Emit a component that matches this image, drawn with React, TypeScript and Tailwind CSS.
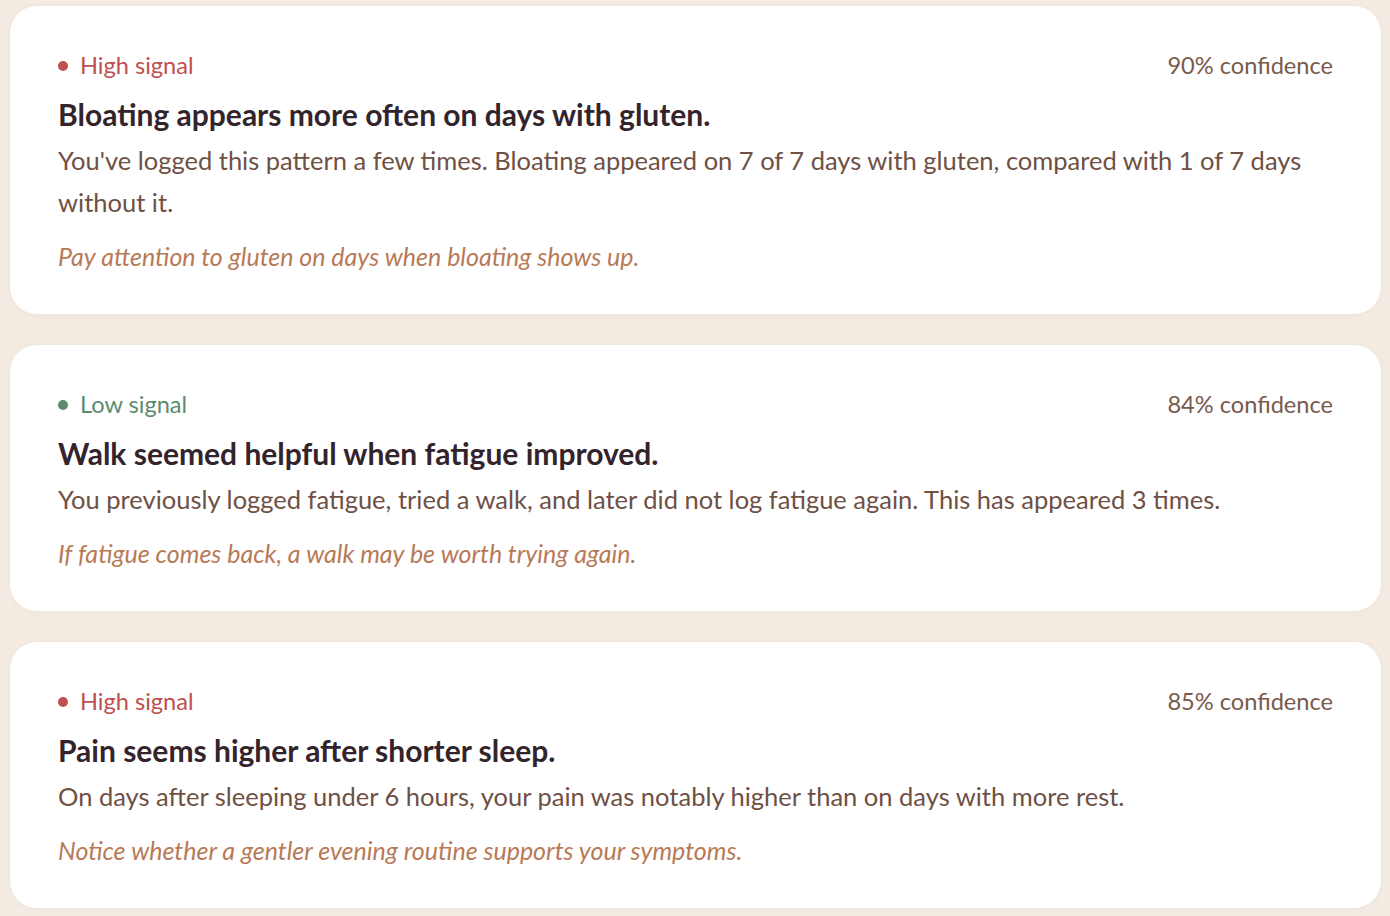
type Signal = "high" | "low";

type Insight = {
  signal: Signal;
  confidence: number;
  title: string;
  body: string;
  hint: string;
};

const insights: Insight[] = [
  {
    signal: "high",
    confidence: 90,
    title: "Bloating appears more often on days with gluten.",
    body: "You've logged this pattern a few times. Bloating appeared on 7 of 7 days with gluten, compared with 1 of 7 days without it.",
    hint: "Pay attention to gluten on days when bloating shows up.",
  },
  {
    signal: "low",
    confidence: 84,
    title: "Walk seemed helpful when fatigue improved.",
    body: "You previously logged fatigue, tried a walk, and later did not log fatigue again. This has appeared 3 times.",
    hint: "If fatigue comes back, a walk may be worth trying again.",
  },
  {
    signal: "high",
    confidence: 85,
    title: "Pain seems higher after shorter sleep.",
    body: "On days after sleeping under 6 hours, your pain was notably higher than on days with more rest.",
    hint: "Notice whether a gentler evening routine supports your symptoms.",
  },
];

function SignalLabel({ signal }: { signal: Signal }) {
  const high = signal === "high";
  return (
    <div className={high ? "flex items-center gap-[12px] text-[#c0504f]" : "flex items-center gap-[12px] text-[#5b8c70]"}>
      <span className={high ? "h-[10px] w-[10px] rounded-full bg-[#c0504f]" : "h-[10px] w-[10px] rounded-full bg-[#5b8c70]"} />
      <span>{high ? "High signal" : "Low signal"}</span>
    </div>
  );
}

function InsightCard({ item }: { item: Insight }) {
  return (
    <div className="rounded-[28px] border border-[#efe6dc] bg-white px-12 pt-[43px] pb-[41px] shadow-[0_1px_6px_rgba(150,120,90,0.06)]">
      <div className="flex items-center justify-between text-[23.6px] leading-[33px]">
        <SignalLabel signal={item.signal} />
        <span className="text-[#7a5a4b]">{item.confidence}% confidence</span>
      </div>
      <h3 className="mt-[14px] text-[30px] leading-[36px] font-bold text-[#33242c]">{item.title}</h3>
      <p className="mt-[7px] text-[25.5px] leading-[42px] text-[#6f5044]">{item.body}</p>
      <p className="mt-[17px] text-[25px] leading-[33px] italic text-[#b87a56]">{item.hint}</p>
    </div>
  );
}

export default function App() {
  return (
    <div
      className="min-h-screen bg-[#f4ece3] pt-[5px] pb-6 pl-[9px] pr-[8px]"
      style={{ fontFamily: "Lato, 'Open Sans', sans-serif" }}
    >
      <div className="flex flex-col gap-[29px]">
        {insights.map((item, i) => (
          <InsightCard key={i} item={item} />
        ))}
      </div>
    </div>
  );
}
